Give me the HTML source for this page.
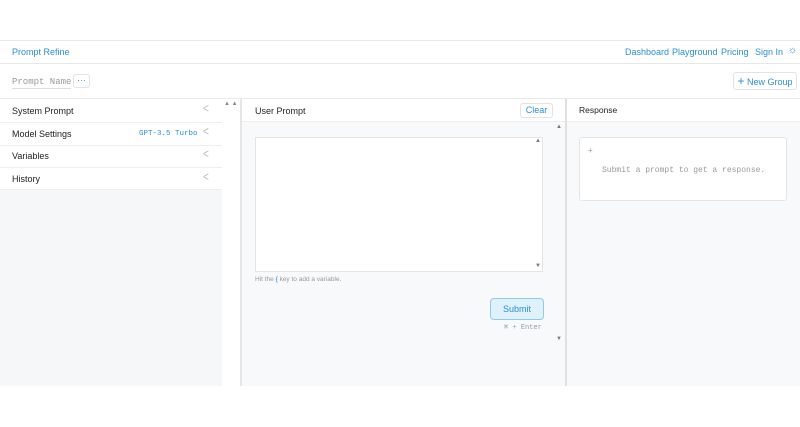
<!DOCTYPE html>
<html><head><style>
*{box-sizing:border-box;margin:0;padding:0}
body{width:800px;height:427px;background:#fff;font-family:"Liberation Sans",sans-serif;position:relative;overflow:hidden;color:#222}
.a{position:absolute;white-space:nowrap}
.mono{font-family:"Liberation Mono",monospace}
.blue{color:#2a8fd0}
.ch{position:absolute;left:203px;font-size:10px;color:#bbb;transform:scaleY(1.3)}
</style></head><body>
<div class="a" style="top:40px;left:0;width:800px;height:1px;background:#e8e8e8"></div>
<div class="a blue" style="top:47px;left:12px;font-size:9px">Prompt Refine</div>
<div class="a blue" style="top:47px;left:625px;font-size:9px">Dashboard</div>
<div class="a blue" style="top:47px;left:672px;font-size:9px">Playground</div>
<div class="a blue" style="top:47px;left:721px;font-size:9px">Pricing</div>
<div class="a blue" style="top:47px;left:755px;font-size:9px">Sign In</div>
<div class="a blue" style="top:45px;left:788px;font-size:10px">☼</div>
<div class="a" style="top:63px;left:0;width:800px;height:1px;background:#e8e8e8"></div>
<div class="a mono" style="top:77px;left:12px;font-size:9px;color:#999;border-bottom:1px solid #ddd;padding-bottom:1px">Prompt Name</div>
<div class="a blue" style="top:74px;left:73px;width:17px;height:14px;border:1px solid #e3e3e3;border-radius:3px;font-size:9px;text-align:center;line-height:10px">···</div>
<div class="a blue" style="top:72px;left:733px;width:64px;height:18px;border:1px solid #e3e3e3;border-radius:3px;font-size:9px;line-height:16px;text-align:center"><span style="font-size:12px">+</span> New Group</div>
<div class="a" style="top:98px;left:0;width:800px;height:1px;background:#e8e8e8"></div>
<!-- left -->
<div class="a" style="top:99px;left:0;width:222px;height:287px;background:#f6f7f9"></div>
<div class="a" style="top:99px;left:0;width:222px;height:91px;background:#fff"></div>
<div class="a" style="top:106px;left:12px;font-size:9px">System Prompt</div>
<div class="a" style="top:129px;left:12px;font-size:9px">Model Settings</div>
<div class="a mono blue" style="top:130px;left:139px;font-size:7.5px">GPT-3.5 Turbo</div>
<div class="a" style="top:151px;left:12px;font-size:9px">Variables</div>
<div class="a" style="top:174px;left:12px;font-size:9px">History</div>
<div class="a" style="top:122px;left:0;width:222px;height:1px;background:#eee"></div>
<div class="a" style="top:145px;left:0;width:222px;height:1px;background:#eee"></div>
<div class="a" style="top:167px;left:0;width:222px;height:1px;background:#eee"></div>
<div class="a" style="top:189px;left:0;width:222px;height:1px;background:#eee"></div>
<div class="ch" style="top:104px">&lt;</div>
<div class="ch" style="top:127px">&lt;</div>
<div class="ch" style="top:149px">&lt;</div>
<div class="ch" style="top:172px">&lt;</div>
<!-- gutter -->
<div class="a" style="top:99px;left:222px;width:20px;height:287px;background:#fff"></div>
<div class="a" style="top:99px;left:240px;width:2px;height:287px;background:#e6e6e6"></div>
<div class="a" style="top:101px;left:224px;font-size:6px;color:#888">▲ ▲</div>
<!-- center -->
<div class="a" style="top:99px;left:242px;width:323px;height:287px;background:#f8f9fa"></div>
<div class="a" style="top:99px;left:242px;width:323px;height:23px;background:#fff;border-bottom:1px solid #eee"></div>
<div class="a" style="top:106px;left:255px;font-size:9px">User Prompt</div>
<div class="a blue" style="top:103px;left:520px;width:33px;height:15px;border:1px solid #e3e3e3;border-radius:3px;font-size:9px;text-align:center;line-height:13px">Clear</div>
<div class="a" style="top:137px;left:255px;width:288px;height:135px;background:#fff;border:1px solid #e5e5e5"></div>
<div class="a" style="top:138px;left:535px;font-size:6px;color:#777">▲</div>
<div class="a" style="top:263px;left:535px;font-size:6px;color:#777">▼</div>
<div class="a" style="top:124px;left:556px;font-size:6px;color:#777">▲</div>
<div class="a" style="top:336px;left:556px;font-size:6px;color:#777">▼</div>
<div class="a" style="top:276px;left:255px;font-size:6.5px;color:#999">Hit the <span class="blue" style="background:#e3f2fb">{</span> key to add a variable.</div>
<div class="a" style="top:298px;left:490px;width:54px;height:22px;background:#dff1fb;border:1px solid #8fcbe8;border-radius:4px;color:#2a8fd0;font-size:9px;text-align:center;line-height:20px">Submit</div>
<div class="a mono" style="top:323px;left:504px;font-size:7px;color:#999">⌘ + Enter</div>
<div class="a" style="top:99px;left:565px;width:2px;height:287px;background:#e0e0e0"></div>
<!-- right -->
<div class="a" style="top:99px;left:567px;width:233px;height:287px;background:#f8f9fa"></div>
<div class="a" style="top:99px;left:567px;width:233px;height:23px;background:#fff;border-bottom:1px solid #eee"></div>
<div class="a" style="top:105px;left:579px;font-size:8.5px">Response</div>
<div class="a" style="top:137px;left:579px;width:208px;height:64px;background:#fff;border:1px solid #e5e5e5;border-radius:3px"></div>
<div class="a" style="top:146px;left:588px;font-size:8px;color:#999">+</div>
<div class="a mono" style="top:166px;left:602px;font-size:8px;color:#999">Submit a prompt to get a response.</div>
</body></html>
